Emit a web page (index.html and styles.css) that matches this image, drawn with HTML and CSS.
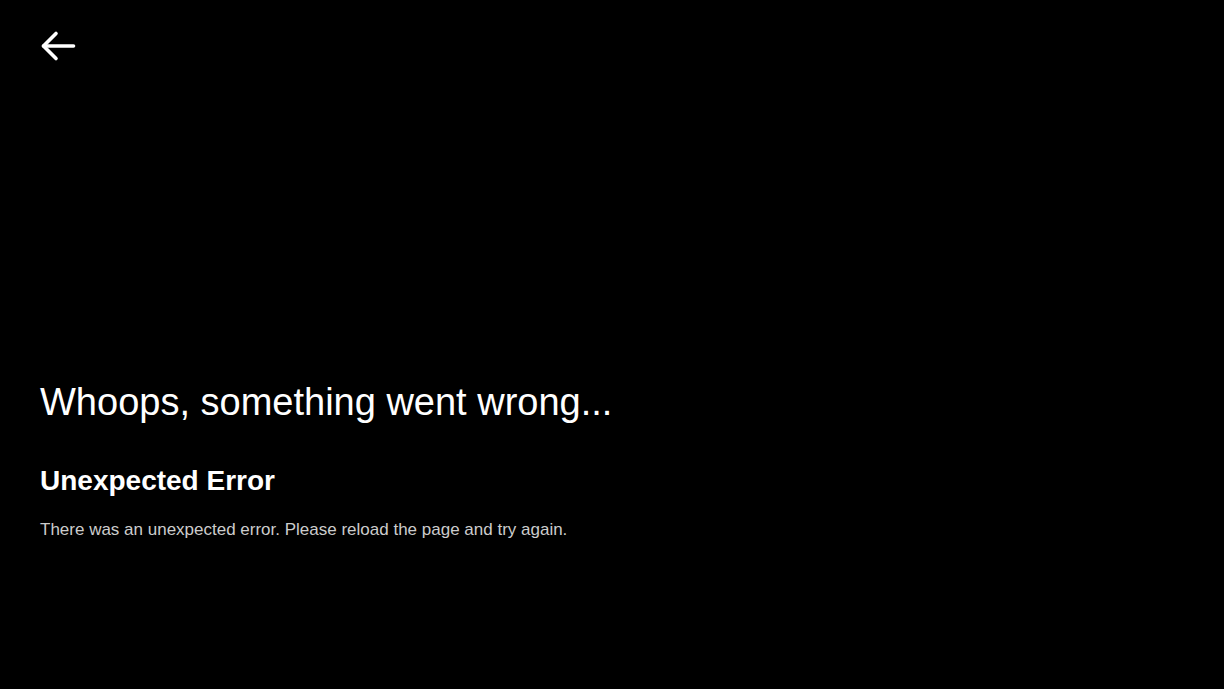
FILE: index.html
```html
<!DOCTYPE html>
<html lang="en">
<head>
    <meta charset="UTF-8">
    <meta name="viewport" content="width=device-width, initial-scale=1.0">
    <title>Error</title>
    <link rel="stylesheet" href="styles.css">
</head>
<body>
    <!-- Top bar with back button -->
    <div class="topbar">
        <a class="back" href="#" aria-label="Back">
            <svg width="36" height="32" viewBox="0 0 36 32" fill="none" stroke="#ffffff" stroke-width="3.6" stroke-linecap="round" stroke-linejoin="round">
                <path d="M3.5 16H33.5"/>
                <path d="M16 3.5L3.5 16L16 28.5"/>
            </svg>
        </a>
    </div>

    <!-- Error message -->
    <div class="error">
        <h1>Whoops, something went wrong...</h1>
        <h2>Unexpected Error</h2>
        <p>There was an unexpected error. Please reload the page and try again.</p>
    </div>
</body>
</html>
```

FILE: styles.css
```css
body {
    font-family: "Liberation Sans", Arial, sans-serif;
    margin: 0;
    background-color: #000000;
    color: #ffffff;
    height: 100vh;
    display: flex;
    flex-direction: column;
}

/* Top bar */
.topbar {
    padding: 30px 40px 0;
}

.back {
    display: inline-block;
    line-height: 0;
}

/* Error block */
.error {
    padding: 0 40px;
    margin-top: 315px;
}

.error h1 {
    font-size: 38px;
    font-weight: normal;
    margin: 0 0 41px;
}

.error h2 {
    font-size: 28px;
    font-weight: bold;
    margin: 0 0 23px;
}

.error p {
    font-size: 17px;
    color: #cccccc;
    margin: 0;
}
```
